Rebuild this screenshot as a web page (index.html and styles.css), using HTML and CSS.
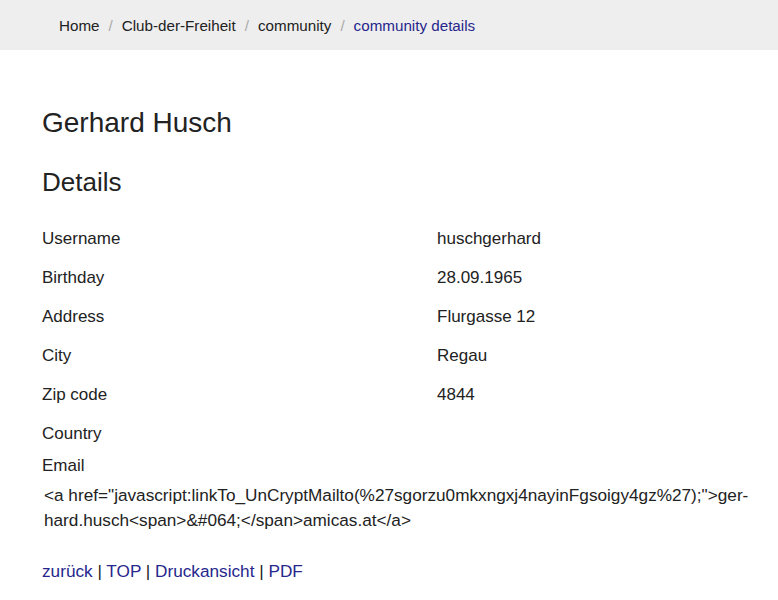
FILE: index.html
```html
<!DOCTYPE html>
<html lang="de">
<head>
    <meta charset="UTF-8">
    <meta name="viewport" content="width=device-width, initial-scale=1.0">
    <title>community details</title>
    <link rel="stylesheet" href="styles.css">
</head>
<body>

    <div class="crumbs">
        <a href="#">Home</a><span class="sep">/</span><a href="#">Club-der-Freiheit</a><span class="sep">/</span><a href="#">community</a><span class="sep">/</span><span class="active">community details</span>
    </div>

    <div class="content">
        <h1>Gerhard Husch</h1>
        <h2>Details</h2>

        <div class="details">
            <div class="row"><div class="label">Username</div><div class="value">huschgerhard</div></div>
            <div class="row"><div class="label">Birthday</div><div class="value">28.09.1965</div></div>
            <div class="row"><div class="label">Address</div><div class="value">Flurgasse 12</div></div>
            <div class="row"><div class="label">City</div><div class="value">Regau</div></div>
            <div class="row"><div class="label">Zip code</div><div class="value">4844</div></div>
            <div class="row"><div class="label">Country</div><div class="value"></div></div>
        </div>

        <div class="email-label">Email</div>
        <div class="email-value">&lt;a href="javascript:linkTo_UnCryptMailto(%27sgorzu0mkxngxj4nayinFgsoigy4gz%27);"&gt;ger&shy;hard.husch&lt;span&gt;&amp;#064;&lt;/span&gt;amicas.at&lt;/a&gt;</div>

        <div class="links">
            <a href="#">zurück</a> | <a href="#">TOP</a> | <a href="#">Druckansicht</a> | <a href="#">PDF</a>
        </div>
    </div>

</body>
</html>
```

FILE: styles.css
```css
body {
    font-family: "Liberation Sans", Arial, sans-serif;
    color: #222;
    margin: 0;
    background: #fff;
}
a {
    text-decoration: none;
    color: #222;
}
.crumbs {
    background-color: #eeeeee;
    height: 50px;
    line-height: 51px;
    padding-left: 59px;
    font-size: 15.2px;
}
.crumbs .sep {
    color: #aaa;
    padding: 0 9px;
}
.crumbs .active {
    color: #26268c;
}
.content {
    padding: 0 20px 0 42px;
    font-size: 17px;
}
h1 {
    font-size: 28px;
    font-weight: normal;
    line-height: 34px;
    margin: 56px 0 0 0;
}
h2 {
    font-size: 26px;
    font-weight: normal;
    line-height: 32px;
    margin: 26px 0 0 0;
}
.details {
    margin-top: 21px;
}
.row {
    display: grid;
    grid-template-columns: 395px 1fr;
    line-height: 25px;
    padding: 7px 0;
}
.email-label {
    line-height: 25px;
}
.email-value {
    font-size: 17.2px;
    line-height: 25px;
    margin-top: 5px;
    padding-left: 2px;
    hyphens: manual;
}
.links {
    font-size: 17.2px;
    line-height: 25px;
    margin-top: 26px;
    color: #222;
}
.links a {
    color: #26268c;
}
```
